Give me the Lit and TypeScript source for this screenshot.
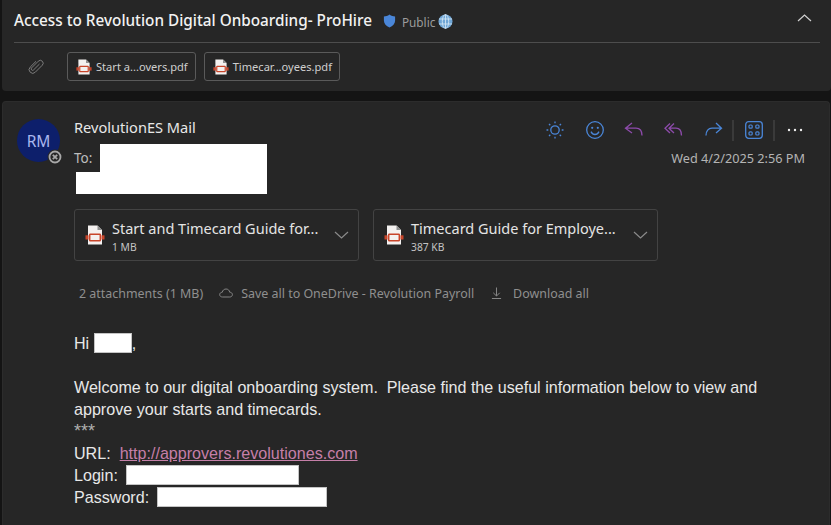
import { LitElement, html, css, svg } from 'lit';
import { customElement } from 'lit/decorators.js';

/** Small red/white pdf page used on every attachment */
const pdfIcon = (size: number) => html`
  <svg class="pdf" width=${size} height=${size} viewBox="0 0 20 20">
    <path d="M3 0.500h9.500l4.500 4.500v14.500H3z" fill="#f4f1f0" />
    <path d="M12.500 0.500v4.500h4.500z" fill="#8f8f8f" />
    <rect x="0.500" y="10.300" width="3" height="4.200" fill="#c8452a" />
    <rect x="16.500" y="10.300" width="3" height="4.200" fill="#c8452a" />
    <rect x="4.700" y="9.200" width="10.600" height="6.600" rx="0.600" fill="#f4f1f0" stroke="#c8452a" stroke-width="1.500" />
  </svg>
`;

const chevron = svg`<path d="M1 8l6.500-6L14 8" fill="none" stroke="currentColor" stroke-width="1.200" />`;

const actionIcons = [
  svg`<g fill="none" stroke="#4a86d8" stroke-width="1.300"><circle cx="10" cy="10" r="4.200" /><path d="M10 1.500v1.800M10 16.700v1.800M1.500 10h1.800M16.700 10h1.800M4 4l1.300 1.300M14.700 14.700L16 16M4 16l1.300-1.300M14.700 5.300L16 4" /></g>`,
  svg`<g fill="none" stroke="#4a86d8" stroke-width="1.300"><circle cx="10" cy="10" r="8.300" /><path d="M6 11.600c1 2 2.400 2.900 4 2.900s3-0.900 4-2.900" /></g><circle cx="7.200" cy="7.800" r="1.100" fill="#4a86d8" /><circle cx="12.800" cy="7.800" r="1.100" fill="#4a86d8" />`,
  svg`<path d="M8 3L1.500 8.200 8 13M1.500 8.200H12c3.600 0 6 2.600 6 7.300" fill="none" stroke="#8d4bab" stroke-width="1.300" />`,
  svg`<path d="M6 3.500L1 8.200 6 13M10 3.500L5 8.200l5 4.800M5 8.200h7c3.400 0 5.500 2.600 5.500 7.300" fill="none" stroke="#8d4bab" stroke-width="1.300" />`,
  svg`<path d="M13 3l5.500 5.200L13 13M18.500 8.200H9c-3.600 0-6 2.600-6 7.300" fill="none" stroke="#4a86d8" stroke-width="1.300" />`,
];

const caret = html`
  <svg class="caret" width="15" height="9" viewBox="0 0 15 9">
    <path d="M1 1l6.500 6L14 1" fill="none" stroke="currentColor" stroke-width="1.200" />
  </svg>
`;

@customElement('app-root')
export class AppRoot extends LitElement {
  static styles = css`
    :host {
      display: block;
      width: 831px;
      height: 525px;
      overflow: hidden;
      background: #141414;
      font-family: 'Noto Sans', 'Open Sans', sans-serif;
      color: #e6e6e6;
    }

    .card {
      background: #262626;
      margin-left: 2px;
      border-radius: 4px;
    }

    .top {
      height: 91px;
      box-sizing: border-box;
      padding: 0 11px 0 12px;
      border-radius: 0 0 4px 4px;
    }

    .subject {
      height: 43px;
      box-sizing: border-box;
      padding-bottom: 2px;
      display: flex;
      align-items: center;
      border-bottom: 1px solid #4d4d4d;
    }

    .subject h1 {
      margin: 0;
      font-size: 15.300px;
      font-weight: 500;
      color: #f2f2f2;
    }

    .shield {
      margin-left: 11px;
      margin-top: 2px;
    }

    .public {
      margin-left: 6px;
      margin-top: 3px;
      font-size: 11.800px;
      color: #9c9c9c;
    }

    .globe {
      margin-left: 3px;
      margin-top: 2px;
    }

    .collapse {
      margin-left: auto;
      margin-right: 8px;
      margin-bottom: 5px;
      color: #d0d0d0;
    }

    .chips {
      display: flex;
      align-items: flex-start;
      padding-top: 9px;
    }

    .clip {
      margin-left: 14px;
      margin-right: 23px;
      margin-top: 7px;
      color: #7c7c7c;
    }

    .chip {
      display: flex;
      align-items: center;
      height: 29px;
      box-sizing: border-box;
      border: 1px solid #5a5a5a;
      border-radius: 3px;
      padding: 0 7px 0 8px;
      margin-right: 8px;
      font-size: 11.100px;
      color: #cfcfcf;
      gap: 4px;
    }

    .message {
      margin-top: 10px;
      margin-right: 1px;
      height: 430px;
      padding-left: 14px;
      border: 1px solid #2c2c2c;
      box-sizing: border-box;
      border-bottom: none;
    }

    .head {
      display: flex;
      padding-top: 16px;
    }

    .avatar {
      position: relative;
      flex: none;
      width: 43px;
      height: 43px;
      margin-top: 1px;
      margin-right: 14px;
      border-radius: 50%;
      background: #0d1f6b;
      color: #a9b6ee;
      font-size: 15.500px;
      display: flex;
      align-items: center;
      justify-content: center;
    }

    .presence {
      position: absolute;
      right: -3px;
      bottom: -3px;
    }

    .who {
      flex: 1;
      position: relative;
      height: 73px;
    }

    .sender {
      font-size: 14.600px;
      line-height: 19px;
      color: #e8e8e8;
    }

    .to {
      margin-top: 12px;
      font-size: 13.500px;
      line-height: 18px;
      color: #bdbdbd;
    }

    /* redaction blocks painted over the recipient line */
    .mask {
      position: absolute;
      background: #fff;
    }

    .mask.a {
      left: 26px;
      top: 26px;
      width: 167px;
      height: 50px;
    }

    .mask.b {
      left: 2px;
      top: 54px;
      width: 167px;
      height: 22px;
    }

    .side {
      flex: none;
      width: 272px;
      margin-right: 24px;
      display: flex;
      flex-direction: column;
      align-items: flex-end;
    }

    .actions {
      display: flex;
      align-items: center;
      height: 22px;
      margin-top: 1px;
    }

    .actions svg {
      display: block;
      margin-left: 19.500px;
    }

    .sep {
      width: 2px;
      height: 21px;
      margin-left: 9px;
      margin-right: -9.500px;
      background: #3a3a3a;
    }

    .time {
      margin-top: 9px;
      font-size: 12.700px;
      line-height: 16px;
      color: #b4b4b4;
    }

    .files {
      display: flex;
      gap: 14px;
      margin-left: 57px;
      margin-top: 18px;
    }

    .file {
      width: 285px;
      height: 52px;
      box-sizing: border-box;
      border: 1px solid #434343;
      border-radius: 3px;
      display: flex;
      align-items: center;
      padding-left: 10px;
      padding-right: 9px;
    }

    .file .pdf {
      flex: none;
      margin-right: 7px;
    }

    .file .meta {
      flex: 1;
      min-width: 0;
      padding-top: 3px;
    }

    .file .name {
      font-size: 14.500px;
      line-height: 19px;
      color: #e4e4e4;
    }

    .file .size {
      font-size: 10.300px;
      line-height: 13px;
      margin-top: 3px;
      color: #c4c4c4;
    }

    .file .caret {
      color: #8a8a8a;
      flex: none;
    }

    .bar {
      display: flex;
      align-items: center;
      margin-left: 62px;
      margin-top: 23px;
      height: 18px;
      font-size: 12.450px;
      color: #8f8f8f;
    }

    .bar svg {
      display: block;
    }

    .cloud {
      margin-left: 16px;
      margin-right: 8px;
    }

    .download {
      margin-left: 17px;
      margin-right: 11px;
    }

    .body {
      margin-left: 57px;
      margin-top: 30px;
      font-family: 'Liberation Sans', Arial, sans-serif;
      font-size: 16.100px;
      line-height: 22px;
      color: #e8e8e8;
    }

    .body p {
      margin: 0;
    }

    .spaced {
      margin-top: 22px !important;
    }

    .stars {
      line-height: 22px;
      font-size: 18px;
      color: #b0b0b0;
    }

    .body a {
      color: #c57fa8;
      text-decoration: underline;
    }

    .block {
      display: inline-block;
      vertical-align: top;
      box-sizing: border-box;
      background: #fff;
      border: 1px solid #c4c4c4;
      height: 20px;
      margin-top: 1px;
    }

    .field .block {
      margin-left: -1px;
    }
  `;

  render() {
    return html`
      <section class="card top">
        <div class="subject">
          <h1>Access to Revolution Digital Onboarding- ProHire</h1>
          <svg class="shield" width="13" height="14" viewBox="0 0 13 15">
            <path d="M6.500 0.500C8.500 2 10.500 2.500 12.500 2.600V7c0 3.500-2.500 6-6 7.500C3 13 0.500 10.500 0.500 7V2.600C2.500 2.500 4.500 2 6.500 0.500z" fill="#4a86d8" />
          </svg>
          <span class="public">Public</span>
          <svg class="globe" width="15" height="15" viewBox="0 0 15 15">
            <circle cx="7.500" cy="7.500" r="7" fill="#6fa6d6" />
            <g fill="none" stroke="#cfe3f3" stroke-width="0.900">
              <ellipse cx="7.500" cy="7.500" rx="3.200" ry="7" />
              <path d="M1 5h13M1 10h13M7.500 0.500v14" />
            </g>
          </svg>
          <svg class="collapse" width="15" height="9" viewBox="0 0 15 9">${chevron}</svg>
        </div>
        <div class="chips">
          <svg class="clip" width="16" height="16" viewBox="0 0 16 16">
            <path d="M11.500 5L5.600 10.900a1.400 1.400 0 0 1-2-2L10.300 2.200a2.800 2.800 0 0 1 4 4L7.300 13.200a3.600 3.600 0 0 1-5.100-5.100L8 2.300" fill="none" stroke="currentColor" stroke-width="1" />
          </svg>
          <div class="chip">${pdfIcon(16)}<span>Start a...overs.pdf</span></div>
          <div class="chip">${pdfIcon(16)}<span>Timecar...oyees.pdf</span></div>
        </div>
      </section>

      <section class="card message">
        <div class="head">
          <div class="avatar">
            RM
            <svg class="presence" width="16" height="16" viewBox="0 0 16 16">
              <circle cx="8" cy="8" r="7.500" fill="#262626" />
              <circle cx="8" cy="8" r="5.500" fill="none" stroke="#a8a8a8" stroke-width="1.800" />
              <path d="M5.800 5.800l4.400 4.400M10.200 5.800l-4.400 4.400" stroke="#a8a8a8" stroke-width="1.800" />
            </svg>
          </div>
          <div class="who">
            <div class="sender">RevolutionES Mail</div>
            <div class="to">To:</div>
            <div class="mask a"></div>
            <div class="mask b"></div>
          </div>
          <div class="side">
            <div class="actions">
              ${actionIcons.map(
                (icon) => html`<svg width="20" height="20" viewBox="0 0 20 20">${icon}</svg>`,
              )}
              <div class="sep"></div>
              <svg width="20" height="20" viewBox="0 0 20 20">
                <rect x="1.700" y="1.700" width="16.600" height="16.600" rx="3" fill="none" stroke="#4a86d8" stroke-width="1.300" />
                <g fill="none" stroke="#4a86d8" stroke-width="1.200">
                  <rect x="5" y="5" width="3.200" height="3.200" rx="1" />
                  <rect x="11.800" y="5" width="3.200" height="3.200" rx="1" />
                  <rect x="5" y="11.800" width="3.200" height="3.200" rx="1" />
                  <rect x="11.800" y="11.800" width="3.200" height="3.200" rx="1" />
                </g>
              </svg>
              <div class="sep"></div>
              <svg width="20" height="20" viewBox="0 0 20 20">
                <circle cx="4" cy="10" r="1.200" fill="#eee" />
                <circle cx="10" cy="10" r="1.200" fill="#eee" />
                <circle cx="16" cy="10" r="1.200" fill="#eee" />
              </svg>
            </div>
            <div class="time">Wed 4/2/2025 2:56 PM</div>
          </div>
        </div>

        <div class="files">
          <div class="file">
            ${pdfIcon(20)}
            <div class="meta">
              <div class="name">Start and Timecard Guide for...</div>
              <div class="size">1 MB</div>
            </div>
            ${caret}
          </div>
          <div class="file">
            ${pdfIcon(20)}
            <div class="meta">
              <div class="name">Timecard Guide for Employe...</div>
              <div class="size">387 KB</div>
            </div>
            ${caret}
          </div>
        </div>

        <div class="bar">
          <span>2 attachments (1 MB)</span>
          <svg class="cloud" width="14" height="10" viewBox="0 0 14 10">
            <path d="M3.500 9C1.800 9 0.700 8 0.700 6.600S1.800 4.300 3.200 4.300C3.600 2.300 5.200 1 7 1c2 0 3.400 1.300 3.700 3.200 1.500 0 2.700 1 2.700 2.400S12.200 9 10.800 9z" fill="none" stroke="currentColor" stroke-width="0.900" />
          </svg>
          <span>Save all to OneDrive - Revolution Payroll</span>
          <svg class="download" width="11" height="14" viewBox="0 0 12 14">
            <path d="M6 1v9M2.500 6.800L6 10.300l3.500-3.500M1 13h10" fill="none" stroke="currentColor" stroke-width="1" />
          </svg>
          <span>Download all</span>
        </div>

        <div class="body">
          <p>Hi <span class="block" style="width:38px"></span>,</p>
          <p class="spaced">Welcome to our digital onboarding system.&nbsp; Please find the useful information below to view and</p>
          <p>approve your starts and timecards.</p>
          <p class="stars">***</p>
          <p>URL:&nbsp; <a href="#">http://approvers.revolutiones.com</a></p>
          <p class="field">Login:&nbsp; <span class="block" style="width:173px"></span></p>
          <p class="field">Password:&nbsp; <span class="block" style="width:170px"></span></p>
        </div>
      </section>
    `;
  }
}

declare global {
  interface HTMLElementTagNameMap {
    'app-root': AppRoot;
  }
}
